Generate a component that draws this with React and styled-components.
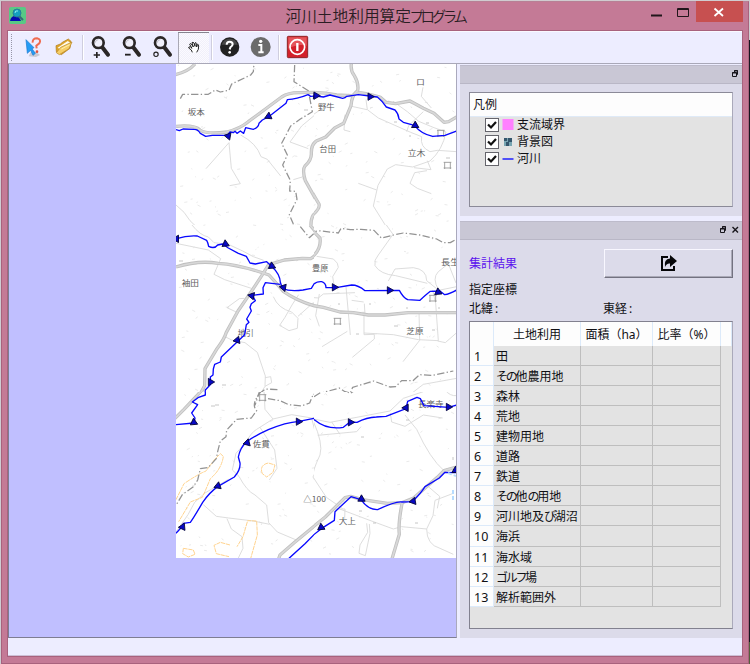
import React from "react";
import styled, { createGlobalStyle, css } from "styled-components";

const Global = createGlobalStyle`
  * { box-sizing: border-box; }
  html, body, #root { margin: 0; width: 750px; height: 664px; overflow: hidden; }
  body {
    font-family: "Noto Sans", "Noto Sans CJK JP", sans-serif;
    font-size: 12px;
    line-height: 16px;
    color: #101014;
    background: linear-gradient(#d0ccd0 40px, #17141f 40px, #17141f 642px, #56603c 642px);
  }
`;

const Desktop = styled.div`
  width: 750px;
  height: 664px;
  padding: 1px 1px 0 1px;
  background: linear-gradient(90deg, #cfccd2 1px, transparent 1px);
`;
const Window = styled.div`
  width: 748px;
  height: 663px;
  display: flex;
  flex-direction: column;
  padding: 0 6px 7px 6px;
  border: 1px solid #a8627d;
  border-top-color: #b88095;
  background: #c47a96;
`;
const TitleBar = styled.header`
  height: 29px;
  flex: none;
  display: grid;
  grid-template-columns: 130px 1fr 130px;
`;
const AppIcon = styled.svg`
  width: 17px;
  height: 17px;
  margin: 5px 0 0 1px;
`;
const Title = styled.h1`
  margin: 0;
  font-family: "Noto Sans CJK JP", sans-serif;
  font-size: 15.7px;
  font-weight: 350;
  line-height: 28px;
  text-align: center;
  white-space: nowrap;
  color: #2a1d23;
`;
const TitleKana = styled.span`
  font-size: 14.5px;
  letter-spacing: -3.4px;
  margin-left: -1.5px;
`;
const Kana = styled.span`
  letter-spacing: -2.3px;
`;
const Controls = styled.div`
  display: flex;
  justify-content: flex-end;
  margin-right: -1px;
`;
const ControlButton = styled.button`
  width: ${(p) => p.$width || 27}px;
  height: 21px;
  padding: 0;
  border: 0;
  margin-top: -1px;
  background: ${(p) => (p.$danger ? "#c75050" : "transparent")};
  svg { display: block; }
`;
const Client = styled.div`
  flex: 1;
  min-height: 0;
  display: flex;
  flex-direction: column;
  background: #ededff;
  box-shadow: 0 0 0 1px #a8627d;
`;
const Toolbar = styled.nav`
  height: 33px;
  flex: none;
  display: flex;
  padding-top: 0;
  border-top: 1px solid #faf9ff;
  border-bottom: 1px solid #a9a8b8;
`;
const Grip = styled.div`
  width: 10px;
  padding: 2px 0 2px 3px;
  &::before {
    content: "";
    display: block;
    height: 27px;
    border-left: 1px dotted #9796a8;
  }
`;
const ToolButton = styled.button`
  width: 31px;
  height: 31px;
  padding: 0;
  border: 0;
  background: transparent;
  svg { display: block; }
  ${(p) =>
    p.$active &&
    css`
      background: repeating-conic-gradient(#f1f0fa 0 25%, #fbfaff 0 50%) 0 0 / 2px 2px;
      box-shadow: inset 0 1px #85848f, inset 1px 0 #a9a8b4;
    `}
`;
const Separator = styled.div`
  width: 5px;
  margin: 3px 0;
  background: linear-gradient(90deg, transparent 2px, #cfcede 2px, #cfcede 3px, #fff 3px, #fff 4px, transparent 4px);
`;
const Workspace = styled.div`
  flex: 1;
  min-height: 0;
  display: grid;
  grid-template-columns: 449px 282px;
  column-gap: 3px;
`;
const MapView = styled.main`
  background: #c0bfff;
  border: 1px solid #7e7d92;
  border-right-color: #aaa9bd;
  border-top: 0;
  padding-left: 167px;
  svg { display: block; }
`;
const Side = styled.aside`
  display: flex;
  flex-direction: column;
  gap: 5px;
  padding-top: 1px;
`;
const Dock = styled.section`
  display: flex;
  flex-direction: column;
  height: ${(p) => p.$height}px;
  background: #dcdbea;
`;
const DockTitle = styled.div`
  flex: none;
  height: 19px;
  display: flex;
  justify-content: flex-end;
  padding-right: 1px;
  background: #c9c7d5;
  border-top: 1px solid #bdbbcb;
  border-bottom: 1px solid #b9b7c6;
  svg { margin-top: -1px; }
`;
const LegendBox = styled.div`
  width: 264px;
  height: 115px;
  margin: 8px 0 0 9px;
  background: #e3e3e3;
  border: 1px solid #8b8a98;
  border-right-color: #aaa9ba;
`;
const LegendHead = styled.div`
  height: 24px;
  padding: 4px 0 0 3px;
  background: #fdfdfd;
  border-bottom: 1px solid #dfeaf7;
`;
const LegendRow = styled.label`
  height: 16.7px;
  display: flex;
  align-items: center;
  padding-left: 15px;
  white-space: nowrap;
`;
const Check = styled.span`
  width: 14px;
  height: 14px;
  flex: none;
  margin-right: 3px;
  background: #fff;
  border: 1px solid #65656c;
  svg { display: block; }
`;
const Swatch = styled.svg`
  width: 12px;
  height: 12px;
  margin-right: 3px;
`;
const Results = styled.div`
  padding: 9px 9px 0;
`;
const ResultHead = styled.div`
  height: 30px;
  display: flex;
  justify-content: space-between;
  align-items: center;
  color: #5b12ee;
`;
const ExportButton = styled.button`
  width: 129px;
  height: 29px;
  margin-top: -2px;
  padding: 0;
  display: grid;
  place-items: center;
  background: #dcdbea;
  border: 1px solid #f8f7ff;
  border-right: 1px solid #737280;
  border-bottom: 1px solid #737280;
  box-shadow: inset -1px -1px #aaa9b7;
`;
const Coordinates = styled.div`
  display: grid;
  grid-template-columns: 134px 1fr;
  grid-template-rows: 19px 19px;
  padding-top: 3px;
  height: 42px;
  & > :first-child { grid-column: 1 / 3; }
`;
const Colon = styled.span`
  margin-left: 2px;
`;
const TableFrame = styled.div`
  width: 264px;
  height: 308px;
  background: #e3e3e3;
  border: 1px solid #82818f;
  border-right-color: #aaa9ba;
`;
const TableRow = styled.div`
  display: grid;
  grid-template-columns: 24px 87px 72px 68px 1fr;
  height: ${(p) => (p.$head ? 23.5 : 20.12)}px;
  white-space: nowrap;
`;
const HeadCell = styled.div`
  background: #fdfdfd;
  border-right: 1px solid #dceafa;
  padding-top: 5px;
  text-align: center;
`;
const IndexCell = styled.div`
  background: #fdfdfd;
  border-right: 1px solid #dceafa;
  border-bottom: 1px solid #dceafa;
  padding: 3px 0 0 4px;
  font-size: 12.5px;
`;
const Cell = styled.div`
  border-right: 1px solid #bebebe;
  border-bottom: 1px solid #bebebe;
  padding: 3px 0 0 2px;
`;
const StatusBar = styled.footer`
  height: 19px;
  flex: none;
  border-bottom: 1px solid #cdbfd5;
`;

const rows = [
  ["田"],
  ["その", "他農用地"],
  ["森林"],
  ["荒地"],
  ["建物用地"],
  ["道路"],
  ["鉄道"],
  ["その", "他", "の", "用地"],
  ["河川地及", "び", "湖沼"],
  ["海浜"],
  ["海水域"],
  ["ゴルフ", "場"],
  ["解析範囲外"],
];
const isKana = (s) => /^[\u3040-\u30ff]+$/.test(s);
const Label = ({ parts }) => parts.map((p, i) => (isKana(p) ? <Kana key={i}>{p}</Kana> : p));

/* Toolbar glyphs use three drawing units per pixel. */
const Glyph = ({ x, children }) => (
  <svg width="31" height="31" viewBox={`${x} 96 93 93`} fill="none">{children}</svg>
);
const Magnifier = ({ x }) => (
  <g transform={`translate(${x} 0)`}>
    <path d="M36 143 L52 164" stroke="#2b2727" strokeWidth="12" strokeLinecap="round" />
    <circle cx="23" cy="128" r="16" fill="#f1f0fb" stroke="#2b2727" strokeWidth="8" />
    <path d="M14 128 Q14 119 23 119" stroke="#aaa8b2" strokeWidth="2" />
  </g>
);

const Arrow = ({ at: [x, y, r = 0] }) => (
  <path d="M-8 -11 L11 0 L-8 11 Z" transform={`translate(${x} ${y}) rotate(${r})`} fill="#0808c4" stroke="#040438" strokeWidth="2.5" />
);
const MapSheet = ({ x, y, clip, roads = [], trails = [], bounds = [], hills = [], rivers = [], arrows = [], labels = [], squares = [] }) => (
  <g clipPath={`url(#${clip})`}>
    <g transform={`translate(${x} ${y}) scale(.33333)`} fill="none" strokeLinejoin="round">
      {trails.map((d) => <path key={d} d={d} stroke="#d8d8d8" strokeWidth="2.6" />)}
      {hills.map((d) => <path key={d} d={d} stroke="#ffd38f" strokeWidth="3" strokeDasharray="13 2" />)}
      {bounds.map((d) => <path key={d} d={d} stroke="#939393" strokeWidth="3.8" strokeDasharray="22 7 4 7" />)}
      {roads.map((d) => <path key={d} d={d} stroke="#c0c0c0" strokeWidth="10" />)}
      {roads.map((d) => <path key={d + "c"} d={d} stroke="#d8d8d8" strokeWidth="5" />)}
      {squares.map(([a, b, w = 17]) => <path key={a} d={`M${a - 3} ${b}h${w + 6} M${a - 3} ${b + 17}h${w + 6} M${a} ${b}v20 M${a + w} ${b}v20`} stroke="#929292" strokeWidth="2.5" />)}
      {labels.map(([t, a, b, w]) => (
        <text key={t} x={a} y={b} fill="#606060" fontFamily='"Noto Sans CJK JP", sans-serif' fontSize="24" textLength={w} lengthAdjust="spacingAndGlyphs">{t}</text>
      ))}
      {rivers.map((d) => <path key={d} d={d} stroke="#0808ff" strokeWidth="4" />)}
      {arrows.map((a) => <Arrow key={a.join()} at={a} />)}
    </g>
  </g>
);

const speckles = Array.from({ length: 470 }, (_, i) => {
  const x = 178 + ((i * 97.31 + (i * i) % 41) % 275);
  const y = 66 + ((i * 61.73 + (i * i * 3) % 67) % 488);
  return `M${x.toFixed(1)} ${y.toFixed(1)}l${1 + (i % 3)} ${(i % 4) - 1.5}`;
}).join("");

const RiverMap = () => (
  <svg width="280" height="494" viewBox="176 64 280 494">
    <defs>
      <clipPath id="nw"><path d="M176 64h138v161H176z" /></clipPath>
      <clipPath id="ne"><path d="M314 64h142v161H314z" /></clipPath>
      <clipPath id="w"><path d="M176 225h138v167H176z" /></clipPath>
      <clipPath id="e"><path d="M314 225h142v167H314z" /></clipPath>
      <clipPath id="sw"><path d="M176 392h138v166H176z" /></clipPath>
      <clipPath id="se"><path d="M314 392h142v166H314z" /></clipPath>
    </defs>
    <path d="M176 64h280v494H176z" fill="#fff" />
    <path d={speckles} stroke="#e4e4e4" strokeWidth=".8" fill="none" />
    <MapSheet x={170} y={60} clip="nw"
      roads={["M15 44 Q55 35 75 12", "M18 199 Q75 194 90 210 Q110 224 170 216 Q210 206 235 185 L335 111 Q355 98 385 98 L450 97", "M455 238 Q423 243 424 280 Q425 300 405 318 Q396 330 406 362 L447 435 Q450 445 430 465 Q420 480 424 515"]}
      trails={["M108 326 L177 248 L184 325 L211 371 L179 377", "M212 225 Q260 250 273 290 L292 298 L332 348", "M450 152 L395 198 L360 246 L415 266", "M18 435 Q45 455 60 482 L88 509", "M370 359 L400 350"]}
      bounds={["M31 116 L38 103 L115 103 L136 90 L151 96 L177 91 L185 72 L242 45 L250 35 L252 10", "M374 15 L372 65 L415 92 L427 155 L390 178 L362 198 L335 250 L352 285 L338 315 L361 361 L359 393 L377 394 L381 418 L358 464 L370 492 L401 510"]}
      rivers={["M18 209 L28 212 L39 207 L73 208 Q84 208 91 220 L107 229 L127 226 L172 226 L180 216 L190 218 L195 214 L201 220 L211 213 L221 220 L227 203 L250 208 Q265 203 267 190 L277 180 L298 169 L348 130 L352 119 Q380 118 414 104 L422 109 L450 107"]}
      arrows={[[173, 228, 190], [297, 170, 35], [439, 107, 5]]}
      labels={[["坂本", 53, 166, 51], ["野牛", 444, 149, 50]]} />
    <MapSheet x={310} y={60} clip="ne"
      roads={["M124 10 Q121 33 133 47 Q147 70 143 92 Q125 105 123 137 L101 190 L74 204 L47 231 L19 243 Q-3 261 3 299", "M0 97 Q40 97 80 105 L125 107 L145 98 Q160 98 210 111 L228 127 L257 131 L300 123 L340 145 L372 160 L402 187 L416 185 L440 171", "M0 386 L27 432 Q31 444 10 463 Q1 475 5 510"]}
      trails={["M168 119 L172 149 L205 174 L302 217 L335 230 Q329 261 360 275 L382 271 L440 275", "M125 139 L171 149", "M105 164 L102 210 L121 215", "M249 124 L292 155 L326 184 L372 203 L408 216 Q398 270 360 303 L308 321 L257 314 L232 327 L204 376 L190 438 L235 510", "M312 323 L363 329 L352 302", "M351 332 L314 338 L300 370 L322 385 L364 401", "M145 370 L200 390", "M339 82 L334 109 L364 144", "M340 155 L296 197 L290 215", "M-40 198 L30 150"]}
      bounds={["M96 504 L112 499 L132 501 L155 507 L177 508"]}
      rivers={["M0 107 L20 108 L40 111 L60 105 L98 115 L105 113 L110 109 L145 104 L202 111 Q215 121 229 141 L255 150 Q265 160 267 177 L280 187 L313 196 Q334 222 368 229 L405 226 L440 213"]}
      arrows={[[20, 107, 0], [182, 110, 0], [317, 197, 30]]}
      labels={[["野牛", 24, 149, 50], ["台田", 28, 275, 50], ["立木", 293, 287, 53], ["ロ", 318, 76, 27]]}
      squares={[[384, 211], [404, 307]]} />
    <MapSheet x={170} y={225} clip="w"
      roads={["M18 126 Q85 105 145 115 Q210 119 297 150 L330 187 L340 199 Q385 231 450 247", "M297 117 Q260 178 204 258 L169 322 Q163 343 141 371 L105 431 L104 482 L89 510", "M297 119 L343 105 L397 100 L422 101 Q456 81 448 38 L431 13 L420 0"]}
      trails={["M66 0 Q90 31 115 36 L132 53 L175 58 L218 78 L250 95 L281 106", "M18 55 L115 75 L152 101 L132 148 L164 164 L244 190", "M171 248 L208 221 L223 220 M171 248 L205 264", "M165 335 L185 345 L225 353 L262 382 L286 453 L285 484 L269 510", "M285 484 L305 473 L302 455 L286 458", "M310 215 Q324 250 365 261 L384 280 L382 310 L357 317 L329 301 L345 277 L366 240 L386 209", "M384 274 L430 233 L449 303"]}
      bounds={["M391 5 L418 38 L431 26", "M266 508 L286 492 L323 494"]}
      rivers={["M20 41 Q50 31 82 33 L110 46 Q114 53 116 64 Q133 73 143 60 L158 57 L175 69 L205 85 L229 94 L240 114 L256 117 L290 110 L307 126 Q330 148 331 172 L337 190 Q360 201 399 195 L424 190 L434 174 L450 169", "M331 178 L286 173 L279 188 L280 207 L247 211 L256 227 L244 236 L240 247 L244 258 L230 282 L237 292 L229 299 L224 329 L202 350 L154 396 L151 411 L134 418 L130 432 L129 450 L121 456 L122 478 L106 495 L105 510"]}
      arrows={[[20, 43, 60], [165, 58, 145], [307, 124, 25], [341, 189, 70], [246, 214, 70], [200, 346, 170], [123, 471, 0]]}
      labels={[["袖田", 35, 182, 52], ["地引", 203, 333, 48], ["豊原", 426, 137, 50]]} />
    <MapSheet x={310} y={225} clip="e"
      roads={["M0 240 L40 247 L90 261 L130 263 L175 270 L225 270 L295 263 L440 263", "M0 101 Q35 75 30 39 L8 17"]}
      trails={["M229 0 L249 28 L205 90 Q191 105 195 122 Q211 148 257 152 L352 175", "M20 94 L70 102 Q86 114 85 127 L68 155 L72 180", "M235 168 L255 132 L310 128 Q350 133 350 167 L386 196 L440 185", "M386 195 Q365 160 385 140 L415 116 L438 174", "M0 217 L25 219 L40 207 L135 203 M28 207 L17 272 L28 304", "M108 185 L121 330", "M162 260 L162 329 L193 328 L193 342 L127 397", "M162 324 L250 329 L325 344 L385 347 L377 235 L368 195", "M327 258 L329 346 L279 410", "M36 365 L112 319", "M383 348 L406 353 L440 323", "M163 236 L165 268", "M125 226 L161 231", "M340 478 L440 460 M340 478 L305 505"]}
      bounds={["M0 25 L24 17 L85 24 L93 10 L121 14 L153 13 L192 16 L214 39 L251 30 L280 24 L330 30 L380 42 L400 53 L421 53 L438 43", "M20 508 L88 489 L105 500 L121 504 L128 487 L191 468 L240 486 L257 485 L275 467 L309 467 L329 449 L367 451 L430 438"]}
      rivers={["M0 189 Q15 168 35 170 Q48 174 48 188 L78 188 L125 180 Q145 180 165 197 L268 196 Q279 217 293 224 L330 226 Q349 208 361 199 L390 198 L404 209 Q419 207 440 195"]}
      arrows={[[75, 187, 0], [240, 196, 0], [386, 202, 25]]}
      labels={[["豊原", 6, 137, 49], ["長生", 393, 121, 55], ["芝原", 289, 328, 52]]} squares={[[74, 280], [360, 211]]} />
    <MapSheet x={170} y={390} clip="sw"
      roads={["M15 85 L42 58 L80 18 L96 0", "M325 509 L330 495 L374 457 L450 394"]}
      trails={["M282 0 L285 58 L309 87 L260 118 Q245 126 225 160 L198 190 L187 240 L207 259 Q230 303 255 315 L290 345 L296 398 L322 426 L379 450", "M270 112 L314 180 L321 235 L298 270", "M309 87 L365 74 L425 84 L450 80", "M425 85 L448 174 L450 220 L429 261 L450 300", "M18 426 L54 374 L74 337 L105 309 L175 268", "M100 344 L139 379 L176 384 L250 393 L299 403", "M171 386 L184 417 L216 440 L219 475 L205 504"]}
      hills={["M18 329 L42 281 Q85 252 108 243 L135 207 L151 191 L160 199 Q155 237 121 266 L106 302 L97 322 L61 336 L26 395", "M277 251 Q267 225 295 219 L315 225 L309 247 L290 261 Z", "M241 509 L262 435 L260 393 L233 392 L219 440 L201 470", "M180 465 L151 457 L132 466 L139 491 L177 500", "M40 475 L70 480 L75 493 L55 501 L38 491 Z"]}
      bounds={["M277 0 Q240 42 260 62 L244 84 L200 88 L170 120 L168 140 L151 153 L143 185 L139 206 L114 233 L91 236 L83 270 L70 290 L37 314 L18 346", "M270 0 L255 46 M294 26 L330 32 L356 44 L394 48 L419 39 L430 12 L450 19"]}
      rivers={["M18 104 L72 99 L75 84 L65 69 L83 44 L67 36 L86 22 L106 15 L106 0", "M18 430 L38 408 L40 400 L61 397 Q72 382 98 337 Q119 307 143 290 L193 261 Q212 240 210 219 L205 201 Q210 173 230 155 Q253 138 295 119 Q347 97 387 94 L432 85 L450 98", "M357 505 L405 461 L450 416"]}
      arrows={[[73, 98, 25], [36, 411, 175], [145, 289, 40], [230, 159, 165], [387, 95, 0], [450, 413, 35]]}
      labels={[["佐貫", 248, 172, 52], ["△100", 400, 337, 68]]}
      squares={[[269, 14]]} />
    <MapSheet x={310} y={390} clip="se"
      roads={["M0 418 L46 381 L105 323 L122 319 L157 329 L232 340 L277 338 L311 324 L382 262 L402 242 L440 231", "M277 336 Q264 400 268 433 L245 510"]}
      trails={["M0 85 L60 97 L156 79 L240 63 L280 25 L340 5", "M10 94 Q40 160 30 195 Q6 246 9 261 L49 322 L98 356", "M23 136 L140 125 L153 110 M65 96 L90 133", "M241 69 L245 96 L285 109 L340 75 L398 84", "M285 75 L320 118 Q360 206 402 242", "M75 357 L105 357 L104 386 M89 357 L171 388 L250 417 L274 410 L350 417 L369 377 L375 331 L430 310", "M355 290 L389 319 L382 355", "M350 417 Q350 464 390 475 L430 493", "M170 400 L173 427 L150 465 L147 490 L166 497 L180 430 L178 402", "M405 0 Q420 19 440 17"]}
      bounds={["M12 20 L42 1 L79 1 L94 -3 L121 10 L130 4"]}
      rivers={["M0 86 L14 90 Q50 120 100 112 L120 96 L141 97 Q170 82 199 81 L228 79 L288 56 L293 34 L321 22 L331 26 L342 47 L416 52 L440 45", "M0 443 L34 416 L73 391 L75 365 L123 320 L153 329 Q175 360 203 359 Q258 333 276 336 L307 335 Q333 310 345 290 L388 264 L405 247 L440 248"]}
      arrows={[[123, 97, 0], [289, 55, 60], [417, 51, 0], [35, 413, 25], [153, 328, 150], [308, 334, 170], [438, 242, 30]]}
      labels={[["△100", -20, 337, 68], ["大上", 86, 403, 52], ["長楽寺", 324, 50, 77]]} />
    <g fill="none" stroke="#b7b7b7" strokeWidth=".8">
      <path d="M305 109v2m2-2v2 M394 122h3 M426 123h3 M409 136h2 M447 157v2m2-2v2 M180 260v2m2-2v2 M216 404v2m2-2v2 M211 406h4 M223 384v2m2-2v2 M338 304h2 M369 304h2 M406 308h2 M438 308h2 M395 325v2m2-2v2 M432 330h3 M356 334h3 M361 437h3 M406 420h3 M373 523h3 M415 523h3 M359 511h3 M453 457v3" />
      <path d="M448 473l8 3m-3 14v11" stroke="#b8dbff" strokeWidth="2" strokeDasharray="4 2" />
    </g>
  </svg>
);

const FloatIcon = () => (
  <svg width="12" height="17" viewBox="0 0 12 17" fill="none" stroke="#16151b"><path d="M5.5 8V5.5H8.5V9.5H8M5 6H9" /><path d="M3.5 7.5H7.5V11.5H3.5ZM3 8H8" /></svg>
);

export default function App() {
  return (
    <>
      <Global />
      <Desktop>
        <Window>
          <TitleBar>
            <AppIcon viewBox="0 0 17 17">
              <rect width="17" height="17" rx="2" fill="#58c985" />
              <path d="M1 14 Q2 9 6 9 Q10 9 12 14Z" fill="#070bb0" />
              <path d="M10 9 L14 13" stroke="#356b78" strokeWidth="2" />
              <circle cx="8" cy="6" r="4" fill="#139fc0" stroke="#287d96" />
              <path d="M6 6 Q6 3 9 4" stroke="#8ce8ed" fill="none" />
            </AppIcon>
            <Title>河川土地利用算定<TitleKana>プログラム</TitleKana></Title>
            <Controls>
              <ControlButton aria-label="最小化"><svg width="27" height="21"><path d="M9 14.5H20" stroke="#21161b" strokeWidth="2" /></svg></ControlButton>
              <ControlButton aria-label="最大化"><svg width="27" height="21"><path d="M8.5 7.5H19.5V15.5H8.5ZM8 8.5H20" fill="none" stroke="#21161b" /></svg></ControlButton>
              <ControlButton aria-label="閉じる" $danger $width={47}><svg width="47" height="21"><path d="M18.5 7.5L27 15M27 7.5L18.5 15" stroke="#fff" strokeWidth="1.8" /></svg></ControlButton>
            </Controls>
          </TitleBar>
          <Client>
            <Toolbar>
              <Grip />
              <ToolButton aria-label="選択">
                <Glyph x={54}>
                  <path d="M91 158 Q105 148 120 165 L108 171 L86 169" fill="#c9c9d4" />
                  <path d="M98 128 Q97 115 111 115 Q125 118 118 130 L109 137 L110 145" stroke="#ef6b50" strokeWidth="6" />
                  <circle cx="111" cy="155" r="4" fill="#e45139" />
                  <path d="M78 119 L102 143 L96 146 L106 160 L99 166 L92 151 L82 160Z" fill="#249cf5" stroke="#1775cf" strokeWidth="2" />
                </Glyph>
              </ToolButton>
              <ToolButton aria-label="開く">
                <Glyph x={147}>
                  <path d="M169 155 L168 137 L181 132 L187 127 L205 117 L213 124 L210 145 L184 164Z" fill="#dfa52a" stroke="#aa791b" strokeWidth="2" />
                  <path d="M173 143 L203 123 L211 128 L184 150Z" fill="#fffbed" />
                  <path d="M169 158 L182 142 L216 126 L207 146 L178 164Z" fill="#f6ce66" stroke="#b78524" strokeWidth="2" />
                  <path d="M184 147 L209 134" stroke="#fff0b0" strokeWidth="3" />
                </Glyph>
              </ToolButton>
              <Separator />
              <ToolButton aria-label="拡大"><Glyph x={255}><Magnifier x={272} /><path d="M281 165H300M290.5 156V174" stroke="#242222" strokeWidth="5" /></Glyph></ToolButton>
              <ToolButton aria-label="縮小"><Glyph x={348}><Magnifier x={365} /><path d="M375 164H392" stroke="#242222" strokeWidth="5.5" /></Glyph></ToolButton>
              <ToolButton aria-label="全体表示"><Glyph x={441}><Magnifier x={458} /><circle cx="468" cy="163" r="6.5" stroke="#242222" strokeWidth="3.5" /></Glyph></ToolButton>
              <ToolButton aria-label="移動" $active>
                <Glyph x={534}>
                  <path d="M577 157 L574 150 L566 144 Q565 139 572 141 L576 145 L569 133 Q570 129 574 132 L580 141 L576 128 Q579 125 582 129 L585 139 V129 Q588 126 590 130 V141 L592 134 Q596 132 596 138 L595 148 L590 157" fill="#fff" stroke="#111" strokeWidth="2.7" />
                </Glyph>
              </ToolButton>
              <Separator />
              <ToolButton aria-label="ヘルプ">
                <Glyph x={642}>
                  <circle cx="689" cy="141" r="29" fill="#222" />
                  <path d="M665 134 A25 25 0 0 1 713 134Z" fill="#484848" />
                  <path d="M680 134 Q680 125 689 125 Q698 125 698 133 Q698 138 691 142 L689 148" stroke="#fff" strokeWidth="6" />
                  <circle cx="689" cy="157" r="4" fill="#fff" />
                </Glyph>
              </ToolButton>
              <ToolButton aria-label="情報">
                <Glyph x={735}>
                  <circle cx="782" cy="141" r="30" fill="#6b6b6b" />
                  <circle cx="782" cy="124" r="5" fill="#fff" /><path d="M775 135H784V157M775 157H791" stroke="#fff" strokeWidth="6" />
                </Glyph>
              </ToolButton>
              <Separator />
              <ToolButton aria-label="終了">
                <Glyph x={843}>
                  <rect x="862" y="109" width="61" height="64" rx="3" fill="#d3202a" stroke="#8f2426" strokeWidth="3" />
                  <path d="M865 112H920V137Q892 130 865 146Z" fill="#e5555b" />
                  <circle cx="892" cy="141" r="22" stroke="#fff" strokeWidth="5" /><path d="M892 129V153" stroke="#fff" strokeWidth="7" />
                </Glyph>
              </ToolButton>
            </Toolbar>
            <Workspace>
              <MapView><RiverMap /></MapView>
              <Side>
                <Dock $height={151}>
                  <DockTitle><FloatIcon /></DockTitle>
                  <LegendBox>
                    <LegendHead>凡例</LegendHead>
                    {["支流域界", "背景図", "河川"].map((name, i) => (
                      <LegendRow key={name}>
                        <Check><svg width="12" height="12" viewBox="0 0 12 12"><path d="M2 5.5L5 8.5L10 3" fill="none" stroke="#111" strokeWidth="2.2" /></svg></Check>
                        <Swatch viewBox="0 0 12 12">
                          {i === 0 && <rect x=".5" width="11" height="11" fill="#ff80ff" />}
                          {i === 1 && <><rect x="2" y="2" width="8" height="8" fill="#78a5b2" /><path d="M2 2h3v3H2zM6 2h4v4H6zM4 6h3v4H4z" fill="#35566d" /></>}
                          {i === 2 && <path d="M.5 6H11.5" stroke="#1010ff" strokeWidth="1.4" />}
                        </Swatch>
                        {name}
                      </LegendRow>
                    ))}
                  </LegendBox>
                </Dock>
                <Dock $height={417}>
                  <DockTitle>
                    <FloatIcon />
                    <svg width="12" height="17" viewBox="0 0 12 17"><path d="M3.5 6L9 11.5M9 6L3.5 11.5" stroke="#16151b" strokeWidth="1.4" /></svg>
                  </DockTitle>
                  <Results>
                    <ResultHead>
                      <span>集計結果</span>
                      <ExportButton aria-label="出力">
                        <svg width="18" height="17" viewBox="0 0 18 17">
                          <path d="M8 2H2V15H14V11" fill="none" stroke="#060608" strokeWidth="2" />
                          <path d="M10 0L17 6L10 12V8.5Q6.5 8 5 12Q3.5 4 10 3.5Z" fill="#060608" />
                        </svg>
                      </ExportButton>
                    </ResultHead>
                    <Coordinates>
                      <span>指定座標</span>
                      <span>北緯<Colon>:</Colon></span>
                      <span>東経<Colon>:</Colon></span>
                    </Coordinates>
                    <TableFrame>
                      <TableRow $head><HeadCell /><HeadCell>土地利用</HeadCell><HeadCell>面積（ha）</HeadCell><HeadCell>比率（%）</HeadCell><HeadCell /></TableRow>
                      {rows.map((parts, i) => (
                        <TableRow key={i}><IndexCell>{i + 1}</IndexCell><Cell><Label parts={parts} /></Cell><Cell /><Cell /></TableRow>
                      ))}
                    </TableFrame>
                  </Results>
                </Dock>
              </Side>
            </Workspace>
            <StatusBar />
          </Client>
        </Window>
      </Desktop>
    </>
  );
}
